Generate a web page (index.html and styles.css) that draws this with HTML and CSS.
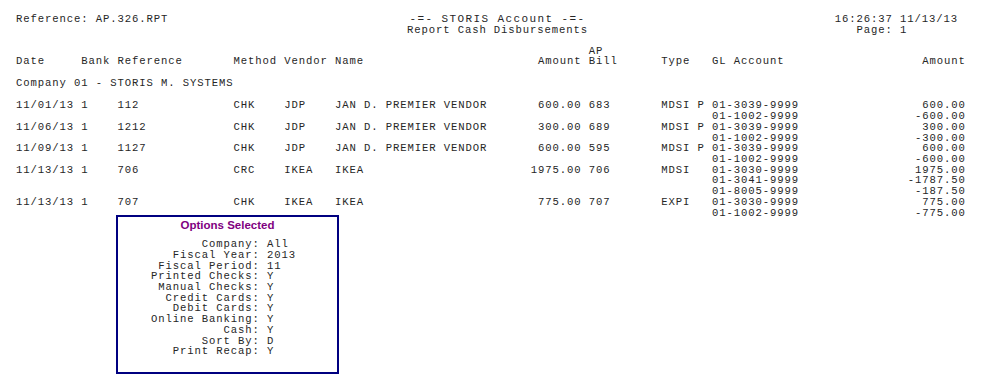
FILE: index.html
```html
<!DOCTYPE html>
<html lang="en">
<head>
<meta charset="utf-8">
<title>Report Cash Disbursements</title>
<link rel="stylesheet" href="styles.css">
</head>
<body>
<div class="report">
  <header class="rpt-head">
    <div class="h-left">Reference: AP.326.RPT</div>
    <div class="h-center">
      <div class="h-title">-=- STORIS Account -=-</div>
      <div>Report Cash Disbursements</div>
    </div>
    <div class="h-right">
      <div>16:26:37 11/13/13</div>
      <div class="h-page">Page: 1</div>
    </div>
  </header>

  <div class="ledger">
    <div class="th">Date</div>
    <div class="th">Bank</div>
    <div class="th">Reference</div>
    <div class="th">Method</div>
    <div class="th">Vendor</div>
    <div class="th">Name</div>
    <div class="th num">Amount</div>
    <div class="th">AP<br>Bill</div>
    <div class="th">Type</div>
    <div class="th"></div>
    <div class="th">GL Account</div>
    <div class="th r">Amount</div>

    <div class="company">Company 01 - STORIS M. SYSTEMS</div>

    <div>11/01/13</div><div>1</div><div>112</div><div>CHK</div><div>JDP</div><div>JAN D. PREMIER VENDOR</div><div class="num">600.00</div><div>683</div><div>MDSI</div><div>P</div><div class="gl">01-3039-9999</div><div class="r">600.00</div>
    <div class="gl">01-1002-9999</div><div class="r">-600.00</div>

    <div>11/06/13</div><div>1</div><div>1212</div><div>CHK</div><div>JDP</div><div>JAN D. PREMIER VENDOR</div><div class="num">300.00</div><div>689</div><div>MDSI</div><div>P</div><div class="gl">01-3039-9999</div><div class="r">300.00</div>
    <div class="gl">01-1002-9999</div><div class="r">-300.00</div>

    <div>11/09/13</div><div>1</div><div>1127</div><div>CHK</div><div>JDP</div><div>JAN D. PREMIER VENDOR</div><div class="num">600.00</div><div>595</div><div>MDSI</div><div>P</div><div class="gl">01-3039-9999</div><div class="r">600.00</div>
    <div class="gl">01-1002-9999</div><div class="r">-600.00</div>

    <div>11/13/13</div><div>1</div><div>706</div><div>CRC</div><div>IKEA</div><div>IKEA</div><div class="num">1975.00</div><div>706</div><div>MDSI</div><div></div><div class="gl">01-3030-9999</div><div class="r">1975.00</div>
    <div class="gl">01-3041-9999</div><div class="r">-1787.50</div>
    <div class="gl">01-8005-9999</div><div class="r">-187.50</div>

    <div>11/13/13</div><div>1</div><div>707</div><div>CHK</div><div>IKEA</div><div>IKEA</div><div class="num">775.00</div><div>707</div><div>EXPI</div><div></div><div class="gl">01-3030-9999</div><div class="r">775.00</div>
    <div class="gl">01-1002-9999</div><div class="r">-775.00</div>
  </div>

  <section class="options">
    <h2 class="opt-title">Options Selected</h2>
    <dl class="opt-list">
      <dt>Company:</dt><dd>All</dd>
      <dt>Fiscal Year:</dt><dd>2013</dd>
      <dt>Fiscal Period:</dt><dd>11</dd>
      <dt>Printed Checks:</dt><dd>Y</dd>
      <dt>Manual Checks:</dt><dd>Y</dd>
      <dt>Credit Cards:</dt><dd>Y</dd>
      <dt>Debit Cards:</dt><dd>Y</dd>
      <dt>Online Banking:</dt><dd>Y</dd>
      <dt>Cash:</dt><dd>Y</dd>
      <dt>Sort By:</dt><dd>D</dd>
      <dt>Print Recap:</dt><dd>Y</dd>
    </dl>
  </section>
</div>
</body>
</html>
```

FILE: styles.css
```css
:root {
  --cw: 7.25px; /* one character cell of the report */
}

html, body {
  margin: 0;
  background: #ffffff;
}

body {
  padding: 14px 16px 0 16px;
  color: #262626;
  font-family: "Liberation Mono", "Courier New", monospace;
  font-size: 10.6px;
  letter-spacing: 0.89px;
  line-height: 10.7px;
}

.report {
  width: 963px;
}

/* ---------- page header ---------- */
.rpt-head {
  display: grid;
  grid-template-columns: 1fr auto 1fr;
  margin-bottom: 9.7px;
}

.h-center {
  text-align: center;
  line-height: 11px;
}

.h-title {
  font-size: 11px;
  letter-spacing: 1.4px;
}

.h-right {
  justify-self: end;
  padding-right: 21px;
  line-height: 11px;
}

.h-page {
  padding-left: calc(3 * var(--cw));
}

/* ---------- ledger grid ---------- */
.ledger {
  display: grid;
  grid-template-columns:
    calc(9 * var(--cw)) calc(5 * var(--cw)) calc(16 * var(--cw))
    calc(7 * var(--cw)) calc(7 * var(--cw)) calc(27 * var(--cw))
    calc(8 * var(--cw)) calc(10 * var(--cw)) calc(5 * var(--cw))
    calc(2 * var(--cw)) calc(12 * var(--cw)) calc(23 * var(--cw));
  white-space: nowrap;
}

.th {
  align-self: end;
}

.num {
  text-align: right;
  padding-right: var(--cw);
}

.r {
  text-align: right;
}

.gl {
  grid-column-start: 11;
}

.company {
  grid-column: 1 / -1;
  margin: 10.7px 0 12px;
}

/* ---------- options box ---------- */
.options {
  box-sizing: border-box;
  width: 223px;
  height: 159px;
  margin: -3px 0 0 100px;
  border: 2px solid #000080;
  padding: 1px 0 0 33px;
}

.opt-title {
  margin: 0 0 7px -33px;
  font-family: "Liberation Sans", Arial, sans-serif;
  font-size: 11.5px;
  letter-spacing: 0;
  line-height: 14px;
  font-weight: bold;
  color: #800080;
  text-align: center;
}

.opt-list {
  display: grid;
  grid-template-columns: calc(15 * var(--cw)) auto;
  margin: 0;
}

.opt-list dt {
  text-align: right;
  white-space: nowrap;
}

.opt-list dd {
  margin: 0;
  padding-left: var(--cw);
}
```
